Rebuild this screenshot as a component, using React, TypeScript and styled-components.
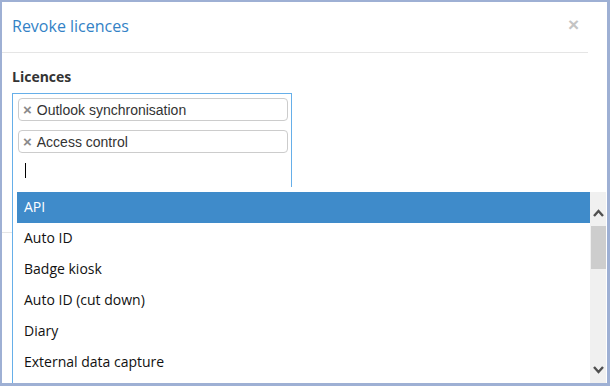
import React from "react";
import styled, { createGlobalStyle } from "styled-components";

const Global = createGlobalStyle`
  html, body { margin: 0; padding: 0; background: #fff; }
  body { font-family: "Open Sans", "Liberation Sans", sans-serif; }
  * { box-sizing: border-box; }
`;

const Frame = styled.div`
  position: relative;
  width: 610px;
  height: 386px;
  border-style: solid;
  border-color: #9eb0d4;
  border-width: 2px 3px 3px 2px;
  overflow: hidden;
  background: #fff;
`;

const Header = styled.div`
  height: 51px;
  margin-right: 19px;
  padding: 0 9px 0 10px;
  display: flex;
  align-items: center;
  justify-content: space-between;
  border-bottom: 1px solid #e5e5e5;
`;

const Title = styled.h4`
  margin: 0;
  font-size: 16px;
  font-weight: 400;
  color: #3382c6;
  padding-bottom: 2px;
`;

const Close = styled.span`
  font-family: "Liberation Sans", Arial, sans-serif;
  font-size: 19px;
  font-weight: 700;
  color: #c4c4c4;
  line-height: 1;
  margin-bottom: 5px;
`;

const Body = styled.div`
  height: 179px;
  padding: 14px 10px 0;
`;

const Label = styled.label`
  display: block;
  font-size: 14px;
  font-weight: 700;
  color: #333;
  margin-bottom: 7px;
`;

const Select = styled.div`
  width: 280px;
  height: 100px;
  border: 1px solid #66afe9;
  border-bottom: none;
  padding: 4px 3px 0 5px;
  display: flex;
  flex-direction: column;
  gap: 9px;
`;

const Tag = styled.div`
  height: 23px;
  border: 1px solid #ccc;
  border-radius: 4px;
  display: flex;
  align-items: center;
  padding-left: 4px;
  font-family: "Liberation Sans", Arial, sans-serif;
  font-size: 14px;
  color: #333;
`;

const TagRemove = styled.span`
  font-size: 15px;
  font-weight: 700;
  color: #8a8a8a;
  margin-right: 5px;
  line-height: 1;
`;

const Caret = styled.div`
  width: 1px;
  height: 15px;
  background: #000;
  margin: 1px 0 0 7px;
`;

const Footer = styled.div`
  margin-right: 19px;
  border-top: 1px solid #e5e5e5;
  height: 40px;
`;

const Dropdown = styled.div`
  position: absolute;
  top: 185px;
  left: 10px;
  right: 0;
  bottom: 0;
  background: #fff;
  border-left: 1px solid #66afe9;
  padding: 5px 1px 0 4px;
  display: flex;
`;

const Options = styled.ul`
  flex: 1;
  margin: 0;
  padding: 0;
  list-style: none;
`;

const Option = styled.li<{ $active?: boolean }>`
  height: 31px;
  display: flex;
  align-items: center;
  padding: 0 0 3px 7px;
  font-size: 14px;
  color: ${(p) => (p.$active ? "#fff" : "#111")};
  background: ${(p) => (p.$active ? "#3f8bca" : "transparent")};
`;

const Scrollbar = styled.div`
  width: 16px;
  background: #f0f0f0;
  display: flex;
  flex-direction: column;
  align-items: center;
`;

const UpArrow = styled.div`
  height: 34px;
  width: 16px;
  display: flex;
  align-items: flex-end;
  justify-content: center;
  padding-bottom: 9px;
`;

const DownArrow = styled.div`
  height: 30px;
  width: 16px;
  display: flex;
  align-items: flex-end;
  justify-content: center;
  padding-bottom: 9px;
`;

const Thumb = styled.div`
  width: 15px;
  height: 43px;
  margin-left: 1px;
  background: #cdcdcd;
`;

const Track = styled.div`
  flex: 1;
`;

const Chevron = ({ up }: { up?: boolean }) => (
  <svg width="11" height="8" viewBox="0 0 11 8">
    <path
      d={up ? "M1 7 L5.5 2 L10 7" : "M1 1 L5.5 6 L10 1"}
      fill="none"
      stroke="#505050"
      strokeWidth="2.4"
    />
  </svg>
);

const items = [
  "API",
  "Auto ID",
  "Badge kiosk",
  "Auto ID (cut down)",
  "Diary",
  "External data capture",
];

export default function App() {
  return (
    <>
      <Global />
      <Frame>
        <Header>
          <Title>Revoke licences</Title>
          <Close>×</Close>
        </Header>
        <Body>
          <Label>Licences</Label>
          <Select>
            <Tag>
              <TagRemove>×</TagRemove>Outlook synchronisation
            </Tag>
            <Tag>
              <TagRemove>×</TagRemove>Access control
            </Tag>
            <Caret />
          </Select>
        </Body>
        <Footer />
        <Dropdown>
          <Options>
            {items.map((it, i) => (
              <Option key={it} $active={i === 0}>
                {it}
              </Option>
            ))}
          </Options>
          <Scrollbar>
            <UpArrow>
              <Chevron up />
            </UpArrow>
            <Thumb />
            <Track />
            <DownArrow>
              <Chevron />
            </DownArrow>
          </Scrollbar>
        </Dropdown>
      </Frame>
    </>
  );
}
